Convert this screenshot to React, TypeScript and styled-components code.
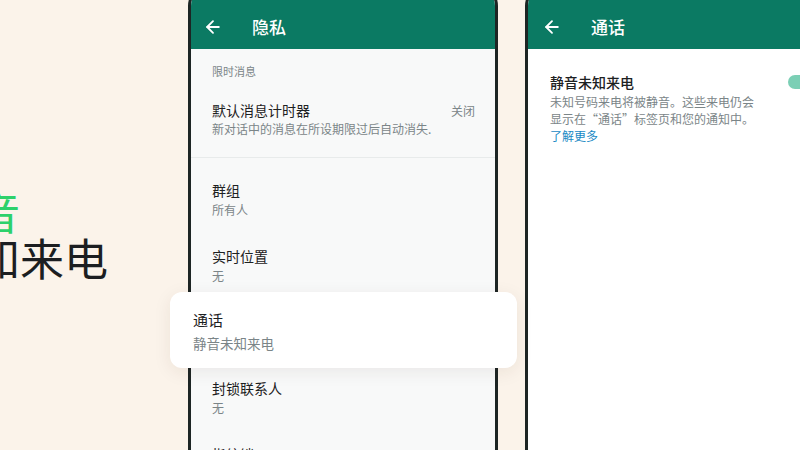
import { FC } from 'react'
import styled, { createGlobalStyle } from 'styled-components'
import { ArrowLeft } from 'lucide-react'

const GlobalStyle = createGlobalStyle`
  html, body {
    margin: 0;
    padding: 0;
    background: #fbf3ea;
    overflow: hidden;
  }
  body {
    font-family: 'Noto Sans CJK SC', 'Noto Sans', sans-serif;
  }
`

const Stage = styled.div`
  display: flex;
  flex-direction: row;
  align-items: flex-start;
  width: 800px;
  height: 450px;
  overflow: hidden;
  background: #fbf3ea;
`

const Hero = styled.div`
  flex: 0 0 188px;
  padding-top: 188px;
  font-size: 44px;
  line-height: 46px;
  white-space: nowrap;
  color: #1c1e21;
`

const HeroLine = styled.div<{ accent?: boolean }>`
  margin-left: -68px;
  color: ${({ accent }) => (accent ? '#2dd16b' : '#1c1e21')};
`

const PhoneWrap = styled.div`
  position: relative;
  flex: 0 0 310px;
  margin-top: -16px;
`

const Phone = styled.div<{ bg: string }>`
  width: 310px;
  height: 520px;
  box-sizing: border-box;
  border: 3px solid #1d2524;
  border-radius: 22px;
  overflow: hidden;
  background: ${({ bg }) => bg};
`

const SecondPhone = styled(Phone)`
  flex: 0 0 310px;
  margin-top: -16px;
  margin-left: 27px;
`

const Header = styled.div<{ pad: number }>`
  display: flex;
  align-items: center;
  height: 62px;
  box-sizing: border-box;
  padding: 18px 0 0 ${({ pad }) => pad}px;
  gap: 29px;
  background: #0b7a63;
  color: #fff;
`

const Title = styled.div`
  font-size: 17px;
  font-weight: 500;
  line-height: 22px;
`

const Section = styled.div`
  padding: 14px 20px 19px 21px;
  border-bottom: 1px solid #e8ebeb;
`

const SectionLabel = styled.div`
  font-size: 11px;
  line-height: 16px;
  color: #7b8588;
`

const TimerRow = styled.div`
  display: flex;
  justify-content: space-between;
  align-items: center;
  margin-top: 21px;
`

const RowTitle = styled.div<{ size?: number }>`
  font-size: ${({ size }) => size ?? 14}px;
  line-height: 20px;
  color: #1d2122;
`

const RowSub = styled.div<{ size?: number }>`
  font-size: ${({ size }) => size ?? 12}px;
  line-height: 18px;
  color: #7b8588;
`

const Value = styled.div`
  font-size: 12px;
  color: #7b8588;
`

const List = styled.div`
  padding-top: 8px;
`

// the row that sits under the popup keeps its place but is not drawn
const Row = styled.div<{ covered?: boolean }>`
  height: 66px;
  box-sizing: border-box;
  padding: 14px 21px;
  display: flex;
  flex-direction: column;
  gap: 1px;
  visibility: ${({ covered }) => (covered ? 'hidden' : 'visible')};
`

const Popup = styled.div`
  position: absolute;
  left: -18px;
  top: 308px;
  width: 347px;
  height: 76px;
  box-sizing: border-box;
  padding: 18px 23px 14px;
  background: #ffffff;
  border-radius: 12px;
  box-shadow: 0 4px 18px rgba(60, 40, 20, 0.08);
  display: flex;
  flex-direction: column;
  gap: 4px;
`

const CallSetting = styled.div`
  display: flex;
  align-items: flex-start;
  gap: 22px;
  padding: 23px 0 0 22px;
`

const SettingText = styled.div`
  flex: 0 0 216px;
  white-space: nowrap;
`

const SettingTitle = styled.div`
  font-size: 14px;
  font-weight: 500;
  line-height: 20px;
  color: #1d2122;
`

const SettingDesc = styled.div`
  margin-top: 1px;
  font-size: 12px;
  line-height: 17px;
  color: #7b8588;
`

const Link = styled.div`
  color: #1a8ac4;
`

const Toggle = styled.div`
  flex: 0 0 34px;
  height: 14px;
  margin-top: 3px;
  border-radius: 7px;
  background: #7bcfb5;
`

const rows = [
  { title: '群组', sub: '所有人' },
  { title: '实时位置', sub: '无' },
  { title: '通话', sub: '静音未知来电', covered: true },
  { title: '封锁联系人', sub: '无' },
  { title: '指纹锁', sub: '已停用' },
]

const App: FC = () => {
  return (
    <>
      <GlobalStyle />
      <Stage>
        <Hero>
          <HeroLine accent>静音</HeroLine>
          <HeroLine>未知来电</HeroLine>
        </Hero>

        <PhoneWrap>
          <Phone bg="#f8f9f9">
            <Header pad={12}>
              <ArrowLeft size={20} strokeWidth={2.2} />
              <Title>隐私</Title>
            </Header>
            <Section>
              <SectionLabel>限时消息</SectionLabel>
              <TimerRow>
                <RowTitle>默认消息计时器</RowTitle>
                <Value>关闭</Value>
              </TimerRow>
              <RowSub>新对话中的消息在所设期限过后自动消失.</RowSub>
            </Section>
            <List>
              {rows.map((r) => (
                <Row key={r.title} covered={r.covered}>
                  <RowTitle>{r.title}</RowTitle>
                  <RowSub>{r.sub}</RowSub>
                </Row>
              ))}
            </List>
          </Phone>
          <Popup>
            <RowTitle size={15}>通话</RowTitle>
            <RowSub size={13.5}>静音未知来电</RowSub>
          </Popup>
        </PhoneWrap>

        <SecondPhone bg="#ffffff">
          <Header pad={14}>
            <ArrowLeft size={20} strokeWidth={2.2} />
            <Title>通话</Title>
          </Header>
          <CallSetting>
            <SettingText>
              <SettingTitle>静音未知来电</SettingTitle>
              <SettingDesc>
                未知号码来电将被静音。这些来电仍会
                <br />
                显示在“通话”标签页和您的通知中。
                <Link>了解更多</Link>
              </SettingDesc>
            </SettingText>
            <Toggle />
          </CallSetting>
        </SecondPhone>
      </Stage>
    </>
  )
}

export default App
